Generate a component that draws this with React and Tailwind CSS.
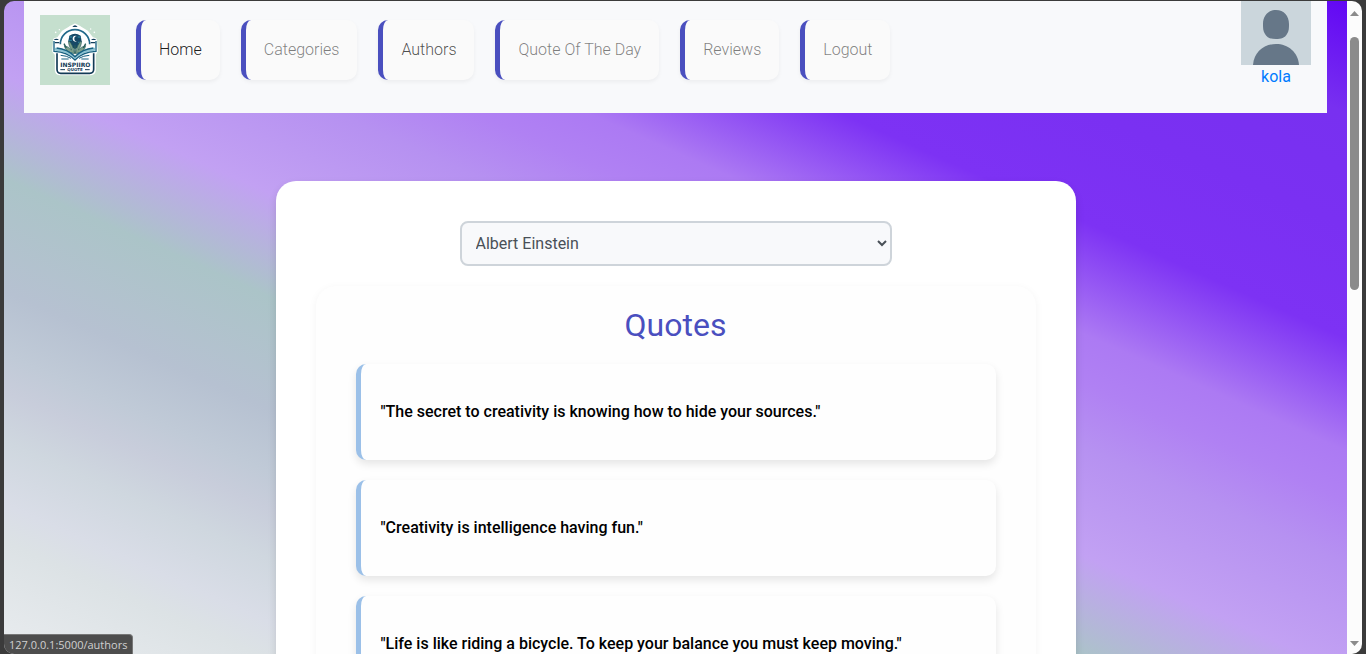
const navItems = [
  { label: 'Home', tone: 'text-black/90' },
  { label: 'Categories', tone: 'text-black/50' },
  { label: 'Authors', tone: 'text-black/70' },
  { label: 'Quote Of The Day', tone: 'text-black/50' },
  { label: 'Reviews', tone: 'text-black/50' },
  { label: 'Logout', tone: 'text-black/50' },
];

const quotes = [
  'The secret to creativity is knowing how to hide your sources.',
  'Creativity is intelligence having fun.',
  'Life is like riding a bicycle. To keep your balance you must keep moving.',
];

function Logo() {
  return (
    <svg viewBox="0 0 210 210" className="block size-[70px]" role="img" aria-label="Inspiiro Quote">
      <rect width="210" height="210" fill="#c5dfce" />
      <path
        d="M105 30 L120 38 L140 50 L156 70 L166 74 L169 108 L163 118 V165 Q163 176 152 176 H59 Q49 176 49 165 V118 L41 108 L44 74 L55 70 L70 50 L90 38Z"
        fill="#fff"
        stroke="#fff"
        strokeWidth="9"
        strokeLinejoin="round"
      />
      <path d="M61 88 A44 44 0 0 1 149 88" fill="none" stroke="#22698a" strokeWidth="5" />
      <path d="M97 36 Q105 26 113 36Z M41 75 Q49 67 57 75Z M153 75 Q161 67 169 75Z" fill="#143f5c" />
      <path d="M44 83H58M152 83H166" stroke="#143f5c" strokeWidth="4" />
      <g fill="#fff">
        <circle cx="47" cy="52" r="2.5" />
        <circle cx="58" cy="44" r="2" />
        <circle cx="163" cy="52" r="2.5" />
        <circle cx="152" cy="42" r="2" />
      </g>
      <path d="M88 62 Q105 50 122 62 L125 79 Q122 96 105 102 Q88 96 85 79Z" fill="#174866" />
      <path d="M88 66H97M86 76H96M113 66H122M114 82H123" stroke="#287995" strokeWidth="4" />
      <path d="M111 63 A9 9 0 1 0 111 79 A7 7 0 0 1 111 63Z" fill="#fff" />
      <path
        d="M104 116 Q76 112 73 92 Q85 94 95 105 Q83 87 87 78 Q99 89 104 116Z M106 116 Q134 112 137 92 Q125 94 115 105 Q127 87 123 78 Q111 89 106 116Z"
        fill="#7c9f8b"
        stroke="#285d5a"
        strokeWidth="2"
      />
      <path d="M72 86L79 99M137 86L130 99M105 91V115" stroke="#285d5a" strokeWidth="4" />
      <path d="M45 98 Q82 98 105 124 Q128 98 165 98 V107 Q127 109 105 132 Q83 109 45 107Z" fill="#8bc3d3" />
      <path
        d="M42 78V109Q83 111 105 135Q127 111 168 109V78M50 99Q82 102 105 125Q128 102 160 99"
        fill="none"
        stroke="#176181"
        strokeWidth="4"
      />
      <path d="M51 115V163Q51 175 62 175H149Q161 175 161 163V115" fill="none" stroke="#123a56" strokeWidth="5" />
      <path d="M62 121Q80 122 93 130M148 121Q130 122 117 130M64 132H86M124 132H146" fill="none" stroke="#176181" strokeWidth="3" />
      <text x="106" y="155" textAnchor="middle" fontFamily="DejaVu Sans, sans-serif" fontSize="18" fontWeight="700" fill="#123a56">
        INSPIIRO
      </text>
      <text x="105" y="169" textAnchor="middle" fontFamily="DejaVu Sans, sans-serif" fontSize="12" fontWeight="700" fill="#123a56">
        QUOTE
      </text>
      <path d="M61 164H75M135 164H149" stroke="#123a56" strokeWidth="3" />
    </svg>
  );
}

function Avatar() {
  return (
    <svg viewBox="0 0 70 64" className="block h-16 w-[70px]" aria-hidden="true">
      <rect width="70" height="64" fill="#cbd6dc" />
      <path
        d="M35 9C43 9 48 15 48 23C48 27 48 30 46 33C44 37 40 38 35 38C30 38 26 37 24 33C22 30 22 27 22 23C22 15 27 9 35 9Z"
        fill="#667788"
      />
      <path d="M12 64C13 51 23 43 35 43C47 43 57 51 58 64Z" fill="#667788" />
    </svg>
  );
}

function Navbar() {
  return (
    <nav className="flex h-28 items-start justify-between bg-[#f8f9fb] px-4">
      <div className="flex items-center pt-3.5">
        <a href="/" className="mr-[26px]">
          <Logo />
        </a>
        <ul className="flex gap-[21px]">
          {navItems.map((item) => (
            <li key={item.label}>
              <a
                href={'#' + item.label}
                className={
                  'flex h-[60px] items-center rounded-[10px] border-l-[5px] border-[#4a4fbf] bg-[#fafafa] px-[18px] font-light whitespace-nowrap shadow-[0_2px_4px_rgba(0,0,0,0.05)] ' +
                  item.tone
                }
              >
                {item.label}
              </a>
            </li>
          ))}
        </ul>
      </div>
      <a href="#profile" className="flex flex-col items-center leading-6 text-[#007bff]">
        <Avatar />
        kola
      </a>
    </nav>
  );
}

function QuoteCard({ text }) {
  return (
    <li className="flex h-24 items-center rounded-[10px] border-l-[5px] border-[#9bc0e8] bg-[#fefefe] px-5 font-medium text-black shadow-[0_4px_8px_rgba(0,0,0,0.1)]">
      "{text}"
    </li>
  );
}

function Scrollbar() {
  return (
    <div className="flex w-[15px] shrink-0 flex-col items-center bg-[#fcfcfc] pt-2.5 pb-2" aria-hidden="true">
      <svg viewBox="0 0 9 5" className="h-[5px] w-[9px]">
        <path d="M0 5L4.5 0L9 5Z" fill="#8b8b8b" />
      </svg>
      <div className="mt-[21px] h-[253px] w-[9px] rounded-full bg-[#8b8b8b]" />
      <svg viewBox="0 0 9 5" className="mt-auto h-[5px] w-[9px]">
        <path d="M0 0L4.5 5L9 0Z" fill="#8b8b8b" />
      </svg>
    </div>
  );
}

export default function App() {
  return (
    <div className="h-screen bg-[#3b3b3b] px-1 pt-px font-[Roboto,sans-serif] text-base">
      <div className="relative flex h-full overflow-hidden rounded-[10px]">
        <div className="min-w-0 flex-1 overflow-y-auto bg-[linear-gradient(24deg,#e9ecef_0%,#dce2e5_9%,#d9dde7_12%,#cfd7df_17%,#c8cddb_21%,#c0cad7_24%,#b6c1d1_29%,#abc4c8_38%,#c2a1f3_46.3%,#b691f1_55%,#b081f3_60%,#ac7af3_64%,#7d32f4_73%,#7a30f2_82%,#7830f0_91%,#6207f4_100%)] px-5 [scrollbar-width:none]">
          <Navbar />
          <main className="mx-auto mt-[68px] max-w-[800px] rounded-[20px] bg-white p-10 shadow-[0_4px_8px_rgba(0,0,0,0.12)]">
            <select
              aria-label="Author"
              defaultValue="Albert Einstein"
              className="mx-auto block h-[45px] w-3/5 rounded-lg border-2 border-[#ced4da] bg-[#f8f9fb] px-2.5 text-[#495057]"
            >
              <option>Albert Einstein</option>
            </select>
            <section className="mt-5 rounded-[20px] bg-[#fefefe] px-10 py-5 shadow-[0_2px_8px_rgba(0,0,0,0.05)]">
              <h2 className="mb-5 text-center text-[32px] leading-[38px] text-[#4a4fbf]">Quotes</h2>
              <ul className="flex flex-col gap-5">
                {quotes.map((text) => (
                  <QuoteCard key={text} text={text} />
                ))}
              </ul>
            </section>
          </main>
        </div>
        <Scrollbar />
        <div className="absolute bottom-0 left-0 h-5 rounded-tr border-t border-r border-[#777] bg-[#4d4d4d] px-[5px] font-['Open_Sans',sans-serif] text-[11px] leading-5 text-[#d0d0d0]">
          127.0.0.1:5000/authors
        </div>
      </div>
    </div>
  );
}
